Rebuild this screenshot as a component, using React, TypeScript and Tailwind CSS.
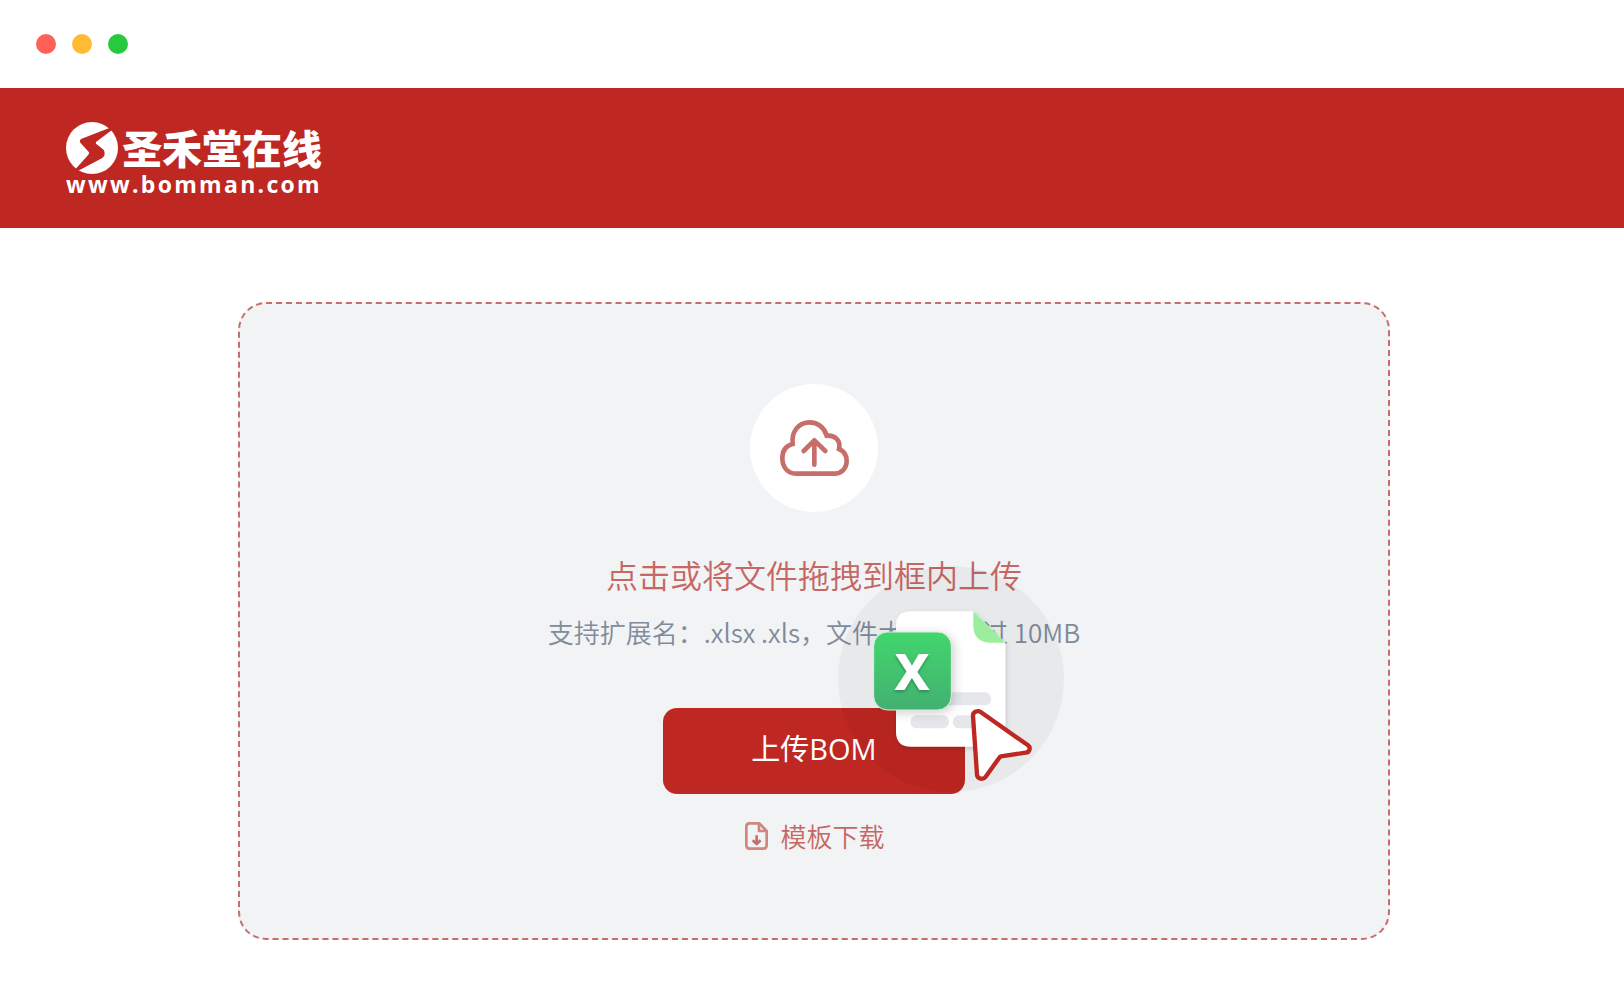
import React from 'react';

const WINDOW_DOTS = ['bg-[#ff6158]', 'bg-[#ffbb33]', 'bg-[#27c93f]'];

function LogoMark() {
  return (
    <svg viewBox="0 0 156 156" className="size-13 shrink-0" aria-hidden="true">
      <circle cx="78" cy="78" r="78" fill="#fff" />
      <path
        d="M130 18 L47 50 Q39 54 43 62 L69 91 Q70 95 67 98 L26 144 L34 148 L109 108 Q116 103 116 96 L115 88 Q114 84 110 81 L90 65 Q88 62 91 59 L139 23 Z"
        fill="#bf2722"
      />
    </svg>
  );
}

function CloudUploadIcon() {
  return (
    <svg
      viewBox="149 150 207 168"
      className="h-14 w-[69px]"
      fill="none"
      stroke="#c76e6b"
      strokeWidth="14"
      aria-hidden="true"
    >
      <path d="M197 311 C171 311 156 290 156 265 C156 243 167 227 187 222 C183 184 205 157 238 157 C262 157 282 172 289 197 C314 194 332 212 326 237 C342 244 349 257 349 272 C349 295 333 311 312 311 Z" />
      <path d="M252 284 V212 M220 243 L252 211 L285 243" strokeLinecap="round" strokeLinejoin="round" />
    </svg>
  );
}

function TemplateIcon() {
  return (
    <svg
      viewBox="0 0 69 84"
      className="h-7 w-[23px]"
      fill="none"
      stroke="#d08581"
      strokeWidth="8"
      strokeLinejoin="round"
      aria-hidden="true"
    >
      <path d="M14 4 H43 L65 27 V70 Q65 80 55 80 H14 Q4 80 4 70 V14 Q4 4 14 4 Z" />
      <path d="M42 5 V27 H64" />
      <path d="M35 40 V66 M23 55 L35 66 L47 55" stroke="#c76e6b" />
    </svg>
  );
}

function DraggedFile() {
  return (
    <svg viewBox="0 0 678 678" className="size-[226px] overflow-visible" aria-hidden="true">
      <defs>
        <linearGradient id="sheetGreen" x1="0" y1="0" x2="0" y2="1">
          <stop offset="0" stopColor="#42d66d" />
          <stop offset="1" stopColor="#43b071" />
        </linearGradient>
        <filter id="softShadow" x="-20%" y="-20%" width="150%" height="150%">
          <feDropShadow dx="3" dy="6" stdDeviation="8" floodColor="#000" floodOpacity="0.16" />
        </filter>
        <filter id="badgeShadow" x="-30%" y="-30%" width="170%" height="170%">
          <feDropShadow dx="8" dy="8" stdDeviation="16" floodColor="#000" floodOpacity="0.2" />
        </filter>
        <filter id="letterShadow" x="-20%" y="-20%" width="140%" height="150%">
          <feDropShadow dx="0" dy="5" stdDeviation="4" floodColor="#0d5a2c" floodOpacity="0.55" />
        </filter>
        <clipPath id="sheetClip">
          <path d="M219 136 H406 L502 230 V542 H219 Q174 542 174 497 V181 Q174 136 219 136 Z" />
        </clipPath>
      </defs>
      <circle cx="339" cy="339" r="339" fill="#000" fillOpacity="0.04" />
      <path
        d="M219 136 H406 L502 230 V497 Q502 542 457 542 H219 Q174 542 174 497 V181 Q174 136 219 136 Z"
        fill="#fff"
        filter="url(#softShadow)"
      />
      <path d="M406 136 V182 Q408 226 454 230 H502 Z" fill="#9cee9f" />
      <rect x="260" y="379" width="200" height="39" rx="19" fill="#e5e7ea" />
      <rect x="217" y="448" width="116" height="39" rx="19" fill="#e5e7ea" />
      <rect x="344" y="448" width="116" height="39" rx="19" fill="#e5e7ea" />
      <g clipPath="url(#sheetClip)">
        <rect x="107" y="198" width="232" height="233" rx="42" fill="#43b071" filter="url(#badgeShadow)" />
      </g>
      <rect x="107" y="198" width="233" height="234" rx="42" fill="url(#sheetGreen)" stroke="#d3f3dc" strokeWidth="3" />
      <text
        x="222"
        y="372"
        textAnchor="middle"
        fontSize="152"
        fill="#fff"
        filter="url(#letterShadow)"
        className="font-['Noto_Sans',sans-serif] font-extrabold"
      >
        X
      </text>
      <path
        d="M405 450 C404 438 419 432 428 438 L570 538 C579 545 575 559 563 560 L489 571 Q486 572 484 575 L443 632 C436 642 418 640 417 626 Z"
        fill="#fff"
        stroke="#bf2722"
        strokeWidth="13"
        strokeLinejoin="round"
      />
    </svg>
  );
}

export default function App() {
  return (
    <div className="min-h-screen bg-white font-['Noto_Sans_CJK_SC',sans-serif]">
      <div className="flex h-22 items-center gap-4 px-9">
        {WINDOW_DOTS.map(color => (
          <span key={color} className={`size-5 rounded-full ${color}`} />
        ))}
      </div>

      <header className="flex h-35 items-center bg-[#bf2722] px-16">
        <a href="#" className="flex flex-col px-0.5 text-white">
          <span className="flex items-center gap-1">
            <LogoMark />
            <span className="pb-0.5 text-[40px] leading-12 font-black">圣禾堂在线</span>
          </span>
          <span className="font-['Open_Sans',sans-serif] text-[23px] leading-5 font-bold tracking-widest">
            www.bomman.com
          </span>
        </a>
      </header>

      <main className="pt-[74px] pb-14 pl-1">
        <section className="relative mx-auto flex w-full max-w-6xl flex-col items-center rounded-[28px] border-2 border-dashed border-[#c76e6b] bg-[#f1f3f5] pt-20 pb-20">
          <div className="flex size-32 items-center justify-center rounded-full bg-white">
            <CloudUploadIcon />
          </div>

          <h1 className="mt-[38px] text-[32px] leading-12 font-[350] text-[#c66764]">
            点击或将文件拖拽到框内上传
          </h1>
          <p className="mt-3.5 text-[26px] leading-10 font-[350] text-[#808b9b]">
            支持扩展名：.xlsx .xls，文件大小不超过 10MB
          </p>

          <button
            type="button"
            className="mt-14 h-[86px] w-[302px] rounded-[14px] bg-[#bf2722] pb-1 font-['Open_Sans','Noto_Sans_CJK_SC',sans-serif] text-[29px] font-normal text-white"
          >
            上传BOM
          </button>

          <a href="#" className="mt-[22px] mb-0.5 flex items-center gap-3 pl-0.5 text-[26px] leading-10 font-[350] text-[#c66764]">
            <TemplateIcon />
            模板下载
          </a>

          {/* file being dragged over the drop area */}
          <div className="pointer-events-none absolute top-[262px] left-1/2 ml-6">
            <DraggedFile />
          </div>
        </section>
      </main>
    </div>
  );
}
